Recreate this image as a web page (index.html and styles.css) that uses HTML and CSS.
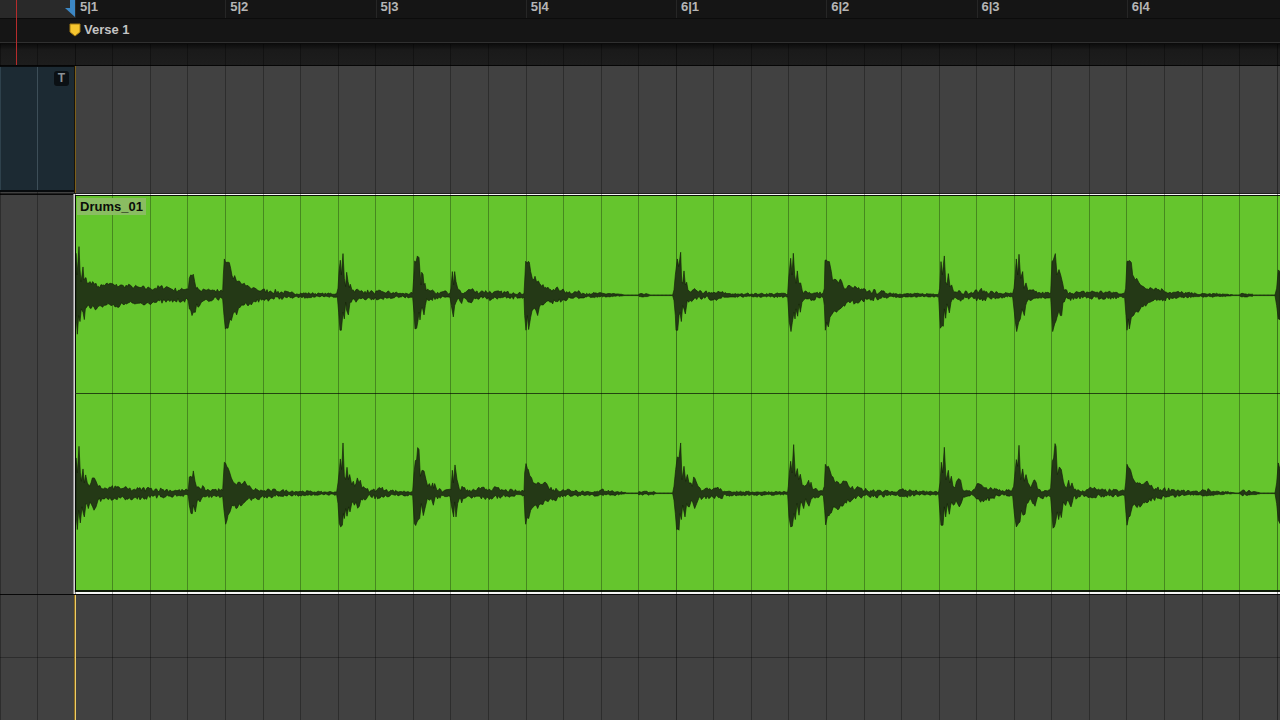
FILE: index.html
```html
<!DOCTYPE html>
<html lang="en">
<head>
<meta charset="utf-8">
<title>Edit window</title>
<link rel="stylesheet" href="styles.css">
</head>
<body>
<div class="editor">
  <header class="rulers">
    <div class="bars">
      <div class="preroll"></div>
      <ol class="beats">
        <li>5|1</li><li>5|2</li><li>5|3</li><li>5|4</li><li>6|1</li><li>6|2</li><li>6|3</li><li>6|4</li>
      </ol>
    </div>
    <div class="markers">
      <svg class="pin" width="12" height="14" viewBox="0 0 12 14" aria-hidden="true"><path d="M1 1h10v8l-5 4-5-4z" fill="#f5c52f" stroke="#a37b13"/></svg>
      <span>Verse 1</span>
    </div>
    <div class="shelf"></div>
    <svg class="flag" width="11" height="18" viewBox="0 0 11 18" aria-hidden="true"><path d="M6 0h5v17L1 8h5z" fill="#3c87c4"/></svg>
    <div class="cursor"></div>
  </header>
  <main class="tracks">
    <svg class="gridlines" viewBox="0 0 1280 660" preserveAspectRatio="none" aria-hidden="true"></svg>
    <section class="track upper">
      <div class="block"><button class="trim" type="button">T</button></div>
      <div class="playhead faint"></div>
    </section>
    <section class="track audio">
      <div class="clip">
        <div class="channel"><svg class="wave" viewBox="0 -298 3612 590" preserveAspectRatio="none" aria-hidden="true"></svg></div>
        <div class="channel"><svg class="wave" viewBox="0 -298 3612 590" preserveAspectRatio="none" aria-hidden="true"></svg></div>
        <span class="name">Drums_01</span>
      </div>
    </section>
    <section class="track lower">
      <div class="lane"></div>
      <div class="playhead"></div>
    </section>
  </main>
</div>
<script src="wave.js"></script>
</body>
</html>
```
FILE: styles.css
```css
* { box-sizing: border-box; }
body {
  margin: 0;
  background: #414141;
  color: #b5b5b5;
  font: bold 13px/16px "Liberation Sans", Arial, sans-serif;
}
.editor {
  display: flex;
  flex-direction: column;
  min-height: 100vh;
  overflow: hidden;
}
.rulers {
  position: relative;
  background: #151515;
}
.bars {
  display: flex;
  height: 19px;
  border-bottom: 1px solid #0c0c0c;
}
.preroll {
  width: 75px;
  background: #292929;
}
.beats {
  flex: 1;
  display: grid;
  grid-template-columns: repeat(8, 1fr);
  margin: 0;
  padding: 0 3px 0 0;
  list-style: none;
}
.beats li {
  padding-left: 4px;
  border-left: 1px solid #262626;
  line-height: 14px;
}
.markers {
  display: flex;
  align-items: center;
  gap: 3px;
  height: 23px;
  padding: 0 0 2px 69px;
  color: #c4c4c4;
}
.pin { display: block; }
.shelf {
  height: 24px;
  border-top: 1px solid #303030;
  border-bottom: 1px solid #060606;
  background: linear-gradient(#0a0a0a, #1a1a1a 7px, #1d1d1d);
}
.flag {
  position: absolute;
  left: 64px;
  top: 0;
}
.cursor {
  position: absolute;
  left: 16px;
  top: 0;
  bottom: 1px;
  width: 1px;
  background: #b52c2c;
}
.tracks {
  position: relative;
  flex: 1;
  display: flex;
  flex-direction: column;
}
.gridlines {
  position: absolute;
  z-index: 1;
  left: 0;
  top: -22px;
  width: 100%;
  height: calc(100% + 22px);
  pointer-events: none;
}
.gridlines path {
  fill: none;
  stroke: #000;
  stroke-opacity: .3;
  shape-rendering: crispEdges;
}
.gridlines .bar { stroke-opacity: .15; }
.track { position: relative; }
.upper {
  height: 128px;
  border-bottom: 1px solid #202020;
}
.block {
  position: relative;
  z-index: 2;
  display: flex;
  justify-content: flex-end;
  align-items: flex-start;
  width: 75px;
  height: 126px;
  padding: 4px 5px 0 0;
  border: solid #080b0d;
  border-width: 1px 1px 2px 0;
  background: linear-gradient(90deg, #2e414c 1px, #1c2a33 1px 37px, #3d4e58 37px 38px, #1c2a33 38px);
}
.trim {
  width: 15px;
  height: 15px;
  padding: 0;
  border: 0;
  border-radius: 3px;
  background: #0b1014;
  color: #8b9196;
  font: bold 12px/15px "Liberation Sans", Arial, sans-serif;
}
.playhead {
  position: absolute;
  z-index: 2;
  left: 74px;
  top: 0;
  bottom: 0;
  width: 2px;
  background: linear-gradient(90deg, #8a691c 1px, #eccd6a 1px);
}
.faint { background: linear-gradient(90deg, #17130a 1px, #7b5f1b 1px); }
.audio {
  height: 401px;
  padding-left: 74px;
  border-top: 1px solid #080808;
  border-bottom: 1px solid #080808;
}
.clip {
  position: relative;
  display: flex;
  flex-direction: column;
  height: 400px;
  margin-top: -1px;
  padding: 1px 0 2px;
  border: solid #f4f4f4;
  border-width: 1px 0 2px 1px;
  border-left-color: #d4d4d4;
  background: #65c52d;
  box-shadow: inset 1px 1px #0b1606, inset 0 -2px #101c0a, -1px 0 #8c8c8c;
}
.channel {
  flex: 1;
  min-height: 0;
  padding-left: 1px;
}
.channel + .channel { border-top: 1px solid #234510; }
.wave {
  position: relative;
  z-index: 2;
  display: block;
  width: 100%;
  height: 100%;
}
.wave path {
  fill: #243916;
  stroke: #142009;
  stroke-width: 2;
}
.name {
  position: absolute;
  z-index: 2;
  left: 2px;
  top: 3px;
  padding: 0 3px;
  background: #8abd62;
  color: #0b0d09;
  line-height: 17px;
}
.lower { flex: 1; }
.lane {
  height: 63px;
  border-bottom: 1px solid #2d2d2d;
}
```
FILE: wave.js
```js
// Peak lists per channel: [offset, rising peaks, falling peaks], as position:level pairs.
const channels = [
  [
    [-18,
     "18:125 21:60 24:100 27:145 30:75 33:40 36:60 39:84 42:45 45:50 48:52 51:35 57:36 60:40 68:40 74:32 85:26 100:30 125:34 135:28 160:28 185:26 210:22 240:20 290:25 300:20 325:14 335:20 345:16 355:18 358:50 362:60 366:58 370:62 374:40 378:20 390:14 400:18 415:18 430:14 445:11 458:11 460:60 463:108 467:97 478:97 482:80 486:58 490:48 494:58 500:40 508:42 515:32 530:28 540:22 550:22 560:17 575:14 600:12 660:6",
     "18:60 22:116 26:60 30:78 34:40 39:50 43:72 46:40 52:32 60:38 68:30 80:40 90:30 110:28 135:34 150:30 170:25 200:24 230:22 260:20 300:18 340:14 355:16 358:40 366:60 370:50 376:50 380:25 388:32 394:20 400:16 430:12 458:10 462:60 466:100 474:98 480:70 484:75 490:52 496:48 500:58 506:36 515:28 530:26 540:24 550:18 575:14 600:10 660:6"],
    [732,
     "0:4 50:4 54:20 57:70 61:104 64:60 69:124 73:50 77:25 80:68 84:40 88:22 91:32 96:14 108:16 120:10 135:11 160:8 190:9 220:7 245:4 278:5 281:50 284:102 288:98 292:117 297:112 300:70 303:30 305:68 309:62 312:30 315:35 319:12 333:12 345:6 370:10 390:5 393:20 397:70 401:30 404:70 408:40 413:20 420:14 430:4 437:8 445:16 460:16 467:9 485:12 520:8 580:7 612:4 615:60 617:101 628:98 632:70 638:45 645:56 650:38 655:42 665:26 680:20 700:17 715:18 725:14 740:10 780:8 800:5 870:4 900:2 912:0 955:0 958:3 985:2 990:0",
     "0:4 52:4 56:50 60:104 64:104 69:50 73:70 77:20 80:45 85:58 90:20 97:12 108:20 115:10 150:8 200:8 240:4 278:5 282:50 285:100 290:98 294:75 297:50 300:73 304:40 307:35 312:58 316:30 320:10 333:10 360:8 390:5 394:30 400:64 404:30 408:20 412:12 425:24 430:6 440:12 450:20 458:16 465:10 520:9 560:8 612:5 614:60 618:104 622:60 626:102 632:65 640:40 648:45 653:60 658:35 670:28 690:20 710:18 730:12 760:8 800:4 870:4 912:0 955:0 958:3 985:2 990:0"],
    [1752,
     "38:0 42:15 46:60 52:108 56:85 59:105 62:128 65:40 68:35 72:72 76:30 80:38 84:14 100:16 115:8 135:10 150:5 180:8 210:4 230:2 260:4 300:3 383:4 386:50 392:110 396:60 400:125 404:60 408:35 412:72 416:35 422:36 427:12 440:10 460:5 490:7 493:20 495:104 508:100 514:70 518:42 528:46 535:35 541:48 550:25 560:20 570:28 580:20 588:24 600:15 625:12 660:9 700:5 720:3 779:3",
     "38:0 42:15 46:60 48:104 53:104 57:60 60:50 64:78 68:30 76:55 82:14 95:18 110:12 135:8 165:10 180:8 210:4 260:3 383:4 388:80 393:108 397:80 402:50 405:70 408:40 413:62 417:25 421:50 426:20 432:12 445:10 490:7 493:30 496:104 500:80 505:94 510:65 520:50 530:50 540:40 550:30 570:22 600:18 620:12 660:8 700:4 779:3"],
    [2532,
     "0:3 56:3 59:20 63:100 67:60 73:117 77:40 81:30 85:64 90:25 95:30 100:12 120:12 150:5 180:15 200:10 220:8 240:5 278:4 282:20 285:50 289:108 293:60 297:122 302:50 308:70 312:20 318:36 324:12 345:10 360:6 392:6 396:100 400:105 406:124 411:60 417:76 422:60 428:35 432:14 450:8 480:7 520:10 560:8 614:6 617:20 621:101 634:97 638:60 645:45 650:50 656:38 670:25 690:22 705:20 730:14 760:8 800:6 830:3 900:3 935:1 940:0 958:0 962:3 998:2 1000:0 1065:0 1070:20 1075:75 1080:70",
     "0:3 56:3 61:98 66:90 70:92 73:40 77:68 81:25 88:52 93:20 100:12 118:12 150:6 180:13 210:8 250:5 278:4 283:50 290:108 296:80 301:70 306:40 313:60 320:20 326:10 360:6 392:5 398:108 404:85 411:65 417:45 421:60 425:60 429:20 436:10 500:8 614:6 618:60 621:104 625:70 628:100 634:65 645:50 655:50 665:32 690:20 720:14 760:8 800:5 830:3 900:3 940:0 958:0 962:3 998:2 1000:0 1065:0 1070:30 1075:70 1080:72"]
  ],
  [
    [-18,
     "18:105 22:60 27:140 31:60 34:35 39:72 43:30 47:54 52:30 58:20 63:30 67:45 73:45 78:35 84:20 90:22 100:12 115:14 140:18 160:14 190:10 240:13 280:10 320:7 355:8 358:48 363:50 367:45 370:66 375:35 380:16 390:14 402:18 410:8 430:10 458:8 461:60 463:92 470:80 478:65 484:45 490:32 500:24 510:32 520:30 524:36 530:24 545:12 560:10 580:6 600:8 690:5",
     "18:60 22:108 26:50 31:88 36:40 43:70 48:30 55:45 60:25 72:50 78:40 84:20 100:16 130:18 150:14 190:14 240:12 300:7 355:7 358:35 363:60 367:60 370:35 376:55 382:20 390:25 396:12 405:10 458:8 462:50 467:92 474:65 480:55 486:35 498:45 508:30 515:36 525:25 540:15 560:16 575:10 600:8 690:5"],
    [732,
     "0:3 50:3 54:30 61:102 65:70 69:150 73:50 77:40 81:77 85:40 89:55 95:25 100:35 104:20 112:45 117:30 121:38 126:14 135:14 150:5 175:14 200:10 215:7 240:4 278:5 282:60 286:97 290:100 293:136 297:130 301:50 306:68 312:66 318:40 323:20 328:28 333:15 338:30 341:14 344:28 350:10 370:5 380:10 393:10 397:68 400:30 405:84 411:40 418:12 430:16 445:5 480:12 520:14 550:8 612:5 614:60 618:88 625:70 635:45 645:28 658:30 668:26 676:32 685:18 700:10 730:10 770:7 800:4 835:3 845:10 865:8 880:4 915:2 920:0 953:0 957:4 1000:4 1008:0",
     "0:3 50:3 54:30 58:90 62:100 67:95 70:60 73:75 77:45 81:68 86:40 90:55 96:25 103:35 108:25 113:44 118:38 123:16 135:20 145:6 180:14 210:7 240:4 278:5 283:90 287:96 294:80 299:75 304:30 310:66 316:40 322:15 328:20 334:15 340:35 345:12 360:14 370:6 390:8 395:40 401:70 404:25 408:70 413:30 418:15 425:28 432:14 440:10 500:12 520:12 560:7 612:5 615:70 617:92 621:72 626:75 632:50 642:38 653:45 665:32 685:24 700:18 720:12 750:8 800:4 850:6 880:4 920:0 953:0 957:4 1000:4 1008:0"],
    [1752,
     "38:0 42:20 47:70 52:108 57:105 62:150 66:40 72:80 77:35 82:55 87:30 93:30 97:20 101:48 108:35 114:20 120:15 130:8 145:10 155:8 170:15 185:8 210:5 250:3 383:3 385:20 388:60 392:95 396:60 401:145 406:50 412:73 416:40 421:56 427:22 434:20 440:25 446:38 450:20 453:32 458:10 468:14 475:5 488:6 493:20 496:86 505:80 515:50 525:30 535:32 545:28 556:35 565:22 580:12 605:14 620:8 660:8 700:3 725:10 760:6 779:5",
     "38:0 42:20 46:60 50:108 57:110 60:60 64:78 68:35 75:70 80:30 88:40 94:20 104:45 110:30 116:15 130:12 160:12 175:12 200:7 250:4 383:3 387:70 392:100 397:98 402:60 406:78 411:30 417:65 422:25 431:45 437:15 447:38 453:18 465:14 480:5 490:6 494:50 497:94 503:65 510:60 520:40 530:45 545:38 555:25 575:20 600:10 640:10 680:6 700:4 730:9 779:5"],
    [2532,
     "0:4 56:3 60:30 64:92 68:60 73:137 78:40 85:68 89:30 94:50 99:20 105:15 113:40 122:38 127:12 140:8 155:3 165:12 172:28 185:24 195:15 215:14 235:8 275:6 281:20 284:50 289:100 293:80 297:143 302:40 308:72 313:35 318:55 324:30 332:15 338:30 345:38 352:15 360:10 370:4 385:8 392:15 397:95 401:105 405:148 408:140 412:55 418:78 424:70 430:35 440:15 446:38 450:15 456:30 462:10 480:5 500:10 515:14 540:8 614:6 617:30 621:86 628:75 638:45 648:28 660:30 670:26 682:35 690:20 710:12 760:10 800:5 840:3 848:10 870:8 885:3 920:3 945:0 957:0 965:6 1000:4 1018:1 1020:0 1065:0 1070:30 1075:90 1080:70",
     "0:4 56:3 60:60 63:95 69:95 73:40 77:70 82:30 88:62 95:25 100:35 108:20 118:40 124:28 130:10 160:6 172:16 182:26 195:18 215:14 240:7 278:6 283:60 289:100 295:90 300:85 304:50 309:65 315:62 320:30 330:15 338:30 345:38 352:12 365:14 375:5 392:12 396:60 399:104 406:90 412:55 416:78 420:55 424:72 430:25 437:36 442:20 453:40 460:12 480:10 520:12 560:7 614:6 618:60 621:95 626:70 633:55 640:35 652:42 665:35 685:25 700:15 740:10 800:4 840:3 860:7 885:3 945:0 957:0 965:5 1018:1 1020:0 1065:0 1070:30 1075:80 1080:90"]
  ]
];

let seed = 7;
function random() {
  seed = (seed * 16807) % 2147483647;
  return seed / 2147483647;
}

// Expands a peak list into an outline, with a fine ripple where the sound decays.
function outline(parts, side) {
  const peaks = parts.flatMap(part => part[side].split(" ").map(pair => {
    const [x, level] = pair.split(":").map(Number);
    return [part[0] + x, level];
  }));
  const points = [];
  peaks.forEach(([x, level], i) => {
    points.push([x, level]);
    const next = peaks[i + 1];
    if (!next) return;
    for (let at = x + 4; at < next[0] - 2; at += 4) {
      const base = level + (next[1] - level) * (at - x) / (next[0] - x);
      const ripple = base < 1 ? 0 : Math.min(7, base * 0.7) * (random() * 2 - 1.1);
      points.push([at, Math.max(0, Math.round(base + ripple))]);
    }
  });
  return points;
}

const ns = "http://www.w3.org/2000/svg";
function addPath(svg, d, name) {
  const path = document.createElementNS(ns, "path");
  path.setAttribute("d", d);
  if (name) path.setAttribute("class", name);
  svg.append(path);
}

document.querySelectorAll(".wave").forEach((svg, i) => {
  const top = outline(channels[i], 1).map(([x, y]) => `${x} ${-y - 1}`);
  const bottom = outline(channels[i], 2).reverse().map(([x, y]) => `${x} ${y + 1}`);
  addPath(svg, `M${top.join("L")}L${bottom.join("L")}Z`);
});

const grid = document.querySelector(".gridlines");
for (let step = -2; step <= 32; step++) {
  const x = Math.floor(75.3 + step * 37.56) + 0.5;
  addPath(grid, `M${x} 0V660`);
  if (step % 16 === 0) addPath(grid, `M${x} 0V660`, "bar");
}
```
